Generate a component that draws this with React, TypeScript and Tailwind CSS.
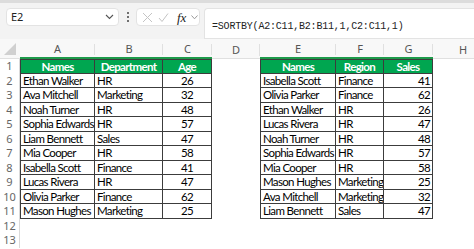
import React from "react";

const colW = ["w-[20px]", "w-[75px]", "w-[68px]", "w-[49px]", "w-[48px]", "w-[76px]", "w-[48px]", "w-[49px]", "w-[60px]"];
const letters = ["", "A", "B", "C", "D", "E", "F", "G", "H"];

const left = [
  ["Names", "Department", "Age"],
  ["Ethan Walker", "HR", "26"],
  ["Ava Mitchell", "Marketing", "32"],
  ["Noah Turner", "HR", "48"],
  ["Sophia Edwards", "HR", "57"],
  ["Liam Bennett", "Sales", "47"],
  ["Mia Cooper", "HR", "58"],
  ["Isabella Scott", "Finance", "41"],
  ["Lucas Rivera", "HR", "47"],
  ["Olivia Parker", "Finance", "62"],
  ["Mason Hughes", "Marketing", "25"],
];
const right = [
  ["Names", "Region", "Sales"],
  ["Isabella Scott", "Finance", "41"],
  ["Olivia Parker", "Finance", "62"],
  ["Ethan Walker", "HR", "26"],
  ["Lucas Rivera", "HR", "47"],
  ["Noah Turner", "HR", "48"],
  ["Sophia Edwards", "HR", "57"],
  ["Mia Cooper", "HR", "58"],
  ["Mason Hughes", "Marketing", "25"],
  ["Ava Mitchell", "Marketing", "32"],
  ["Liam Bennett", "Sales", "47"],
];

const font = { fontFamily: "Lato, 'Liberation Sans', sans-serif" };

function Cell({ w, text, header, first, align }: { w: string; text: string; header: boolean; first: boolean; align: "l" | "c" | "r" }) {
  const base = header
    ? "bg-[#00a650] text-white font-bold text-center border-t"
    : align === "c"
    ? "bg-white text-black text-center"
    : align === "r"
    ? "bg-white text-black text-right pr-[2px]"
    : "bg-white text-black text-left pl-[2px]";
  return (
    <div className={`${w} h-full shrink-0 border-r border-b border-[#3c3c3c] ${first ? "border-l" : ""} ${base} whitespace-nowrap overflow-hidden tracking-[-0.65px]`}>
      {text}
    </div>
  );
}

function Empty({ w }: { w: string }) {
  return <div className={`${w} h-full shrink-0 bg-white`} />;
}

export default function App() {
  const rows = Array.from({ length: 13 }, (_, i) => i);
  return (
    <div className="w-[474px] h-[249px] overflow-hidden bg-white flex flex-col" style={font}>
      {/* toolbar */}
      <div className="h-[39px] shrink-0 bg-[#f3f3f3] border-t-[3px] border-[#dcdcdc] flex items-start pt-[5px] pl-[6px] gap-0 relative">
        <div className="w-[113px] h-[18px] bg-white rounded-[4px] border border-[#e3e3e3] flex items-center justify-between pl-[4px] pr-[4px]">
          <span className="text-[11px] text-[#222]" style={{ fontFamily: "'Noto Sans', sans-serif" }}>E2</span>
          <svg width="9" height="6" viewBox="0 0 9 6"><path d="M1 1 L4.5 4.5 L8 1" stroke="#555" strokeWidth="1.1" fill="none" /></svg>
        </div>
        <div className="w-[17px] h-[18px] flex flex-col items-center justify-center gap-[2px]">
          <div className="w-[2px] h-[2px] bg-[#444] rounded-full" />
          <div className="w-[2px] h-[2px] bg-[#444] rounded-full" />
          <div className="w-[2px] h-[2px] bg-[#444] rounded-full" />
        </div>
        <div className="w-[64px] h-[18px] bg-white rounded-[4px] border border-[#e3e3e3] flex items-center pl-[5px] gap-[5px]">
          <svg width="11" height="11" viewBox="0 0 11 11"><path d="M1 1 L10 10 M10 1 L1 10" stroke="#c4c4c4" strokeWidth="1" fill="none" /></svg>
          <svg width="11" height="11" viewBox="0 0 11 11"><path d="M1 6 L4 9.5 L10 1.5" stroke="#c4c4c4" strokeWidth="1" fill="none" /></svg>
          <span className="text-[13px] italic text-[#222] ml-[3px] leading-none" style={{ fontFamily: "'Liberation Serif', serif" }}>fx</span>
          <svg width="7" height="5" viewBox="0 0 7 5"><path d="M0.5 0.5 L3.5 3.8 L6.5 0.5" stroke="#999" strokeWidth="1" fill="none" /></svg>
        </div>
        <div className="ml-[4px] flex-1 h-[31px] bg-white rounded-tl-[4px] border-l border-t border-b border-[#e3e3e3] pl-[7px] pt-[2px]">
          <span className="text-[10px] text-[#222] tracking-[-0.2px]" style={{ fontFamily: "'Liberation Mono', monospace" }}>
            =SORTBY(A2:C11,B2:B11,1,C2:C11,1)
          </span>
        </div>
      </div>
      {/* column headers */}
      <div className="h-[20px] shrink-0 flex bg-[#f8f8f8]">
        {letters.map((l, i) => {
          const sel = i >= 1 && i <= 3 ? true : i >= 5 && i <= 7;
          return (
            <div
              key={i}
              className={`${colW[i]} shrink-0 h-full flex items-end justify-center pb-[1px] text-[11px] text-[#555] relative ${sel ? "border-b-2 border-[#1e9a4a]" : "border-b border-[#e0e0e0]"}`}
              style={{ fontFamily: "'Noto Sans', sans-serif" }}
            >
              {i === 0 ? (
                <svg width="14" height="14" viewBox="0 0 14 14" className="mb-[1px]"><path d="M13 1 L13 13 L1 13 Z" fill="#d0d0d0" /></svg>
              ) : (
                <span className="leading-[15px]">{l}</span>
              )}
              {i > 0 && <div className="absolute right-0 top-[5px] bottom-[2px] w-px bg-[#e0e0e0]" />}
            </div>
          );
        })}
      </div>
      {/* rows */}
      <div className="flex flex-col">
        {rows.map((r) => (
          <div key={r} className="h-[14.5px] shrink-0 flex text-[11.5px] leading-[13.5px]">
            <div
              className={`${colW[0]} shrink-0 h-full text-center text-[#666] bg-white border-r border-[#dadada] text-[11px]`}
              style={{ fontFamily: "'Noto Sans', sans-serif", lineHeight: "14px" }}
            >
              {r + 1}
            </div>
            {r < 11 ? (
              <>
                <Cell w={colW[1]} text={left[r][0]} header={r === 0} first align="l" />
                <Cell w={colW[2]} text={left[r][1]} header={r === 0} first={false} align="l" />
                <Cell w={colW[3]} text={left[r][2]} header={r === 0} first={false} align="c" />
                <Empty w={colW[4]} />
                <Cell w={colW[5]} text={right[r][0]} header={r === 0} first align="l" />
                <Cell w={colW[6]} text={right[r][1]} header={r === 0} first={false} align="l" />
                <Cell w={colW[7]} text={right[r][2]} header={r === 0} first={false} align="r" />
                <Empty w={colW[8]} />
              </>
            ) : (
              <div className="flex-1 bg-white" />
            )}
          </div>
        ))}
      </div>
    </div>
  );
}
